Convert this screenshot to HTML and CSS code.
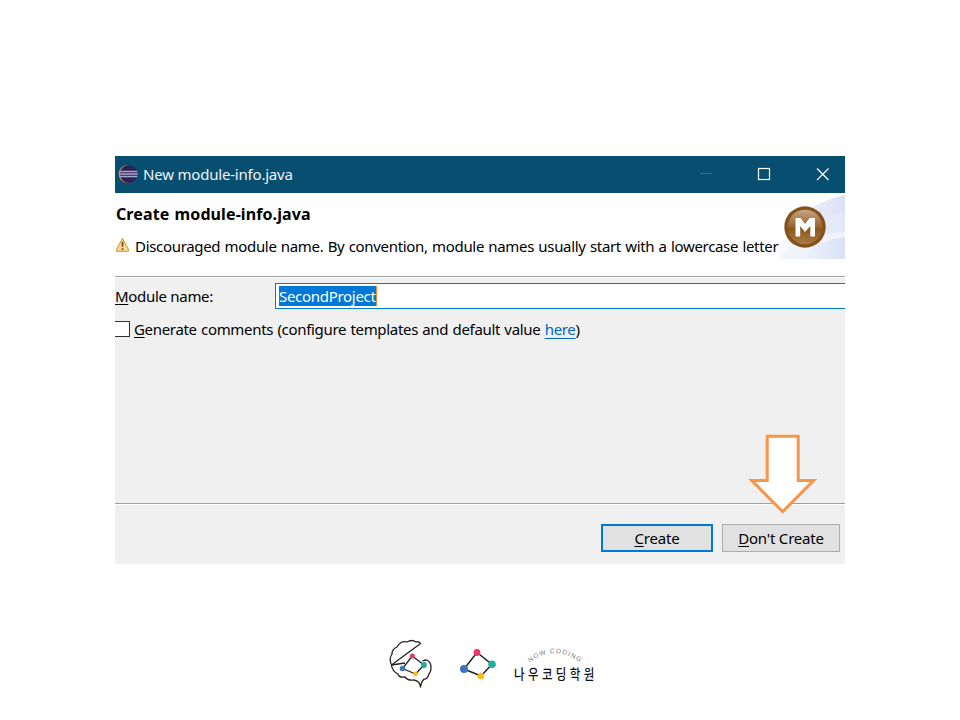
FILE: index.html
```html
<!DOCTYPE html>
<html lang="ko">
<head>
<meta charset="utf-8">
<title>New module-info.java</title>
<link rel="stylesheet" href="styles.css">
</head>
<body>
<main class="slide">
  <section class="dialog">
    <header class="titlebar">
      <svg class="app-icon" width="20" height="20" viewBox="0 0 20 20">
        <circle cx="9.5" cy="10" r="9" fill="#d98a3c"/>
        <circle cx="10.7" cy="10" r="8.9" fill="#2c2255"/>
        <path d="M2 7.5h17.3M1.8 10h17.9M2 12.500h17.3" stroke="#aaa8cc" stroke-width="1.700"/>
      </svg>
      <span class="caption">New module-info.java</span>
      <svg class="controls" width="132" height="14" viewBox="0 0 132 14">
        <path d="M2 6.5h12" stroke="#39708c"/>
        <rect x="60.500" y="1.500" width="11" height="11" fill="none" stroke="#fff" stroke-width="1.2"/>
        <path d="M119 1.500l11.500 11.500M130.500 1.500l-11.500 11.500" stroke="#fff" stroke-width="1.2"/>
      </svg>
    </header>
    <div class="banner">
      <div class="banner-text">
        <h1 class="heading">Create module-info.java</h1>
        <p class="message">
          <svg class="warning" width="15" height="16" viewBox="0 0 15 16">
            <path d="M7.500 1.500L13.500 12.500Q14 14.300 12.500 14.300H2.500Q1 14.300 1.500 12.500Z" fill="#fbdc92" stroke="#d9a24a" stroke-width="1.200" stroke-linejoin="round"/>
            <path d="M7.500 4.800v5M7.500 11.200v1.700" stroke="#6b4a18" stroke-width="1.700"/>
          </svg>
          <span class="message-label">Discouraged module name. By convention, module names usually start with a lowercase letter</span>
        </p>
      </div>
      <svg class="wizard" width="67" height="66" viewBox="0 0 67 66">
        <defs>
          <linearGradient id="sky" x1="0" y1="0" x2="1" y2="0"><stop offset="0" stop-color="#fafbfe"/><stop offset="1" stop-color="#d9e1f4"/></linearGradient>
          <linearGradient id="coin" x1="0" y1="0" x2="0" y2="1"><stop offset="0" stop-color="#c4a684"/><stop offset=".5" stop-color="#97632a"/><stop offset=".55" stop-color="#8c571d"/><stop offset="1" stop-color="#ab7a45"/></linearGradient>
        </defs>
        <path d="M0 66Q10 14 67 2V66Z" fill="url(#sky)"/>
        <path d="M40 26Q54 20 67 21V39Q53 39 38 49Z" fill="#e3e9f7"/>
        <path d="M3 64Q34 40 67 39V44Q36 48 24 66H0Z" fill="#f0f3fb"/>
        <circle cx="27" cy="34" r="20.700" fill="#84521b"/>
        <circle cx="27" cy="34" r="17.300" fill="url(#coin)"/>
        <path d="M17.500 43.500V25H22.500L27 31L31.800 25H37V43.500H32.300V33L27 39L22.200 33V43.500Z" fill="#fff"/>
      </svg>
    </div>
    <div class="content">
      <div class="name-row">
        <label class="name-label"><u>M</u>odule name:</label>
        <div class="name-field"><span class="selected">SecondProject</span></div>
      </div>
      <div class="check-row">
        <span class="checkbox"></span>
        <span class="check-label"><u>G</u>enerate comments (configure templates and default value <a class="link">here</a>)</span>
      </div>
    </div>
    <footer class="actions">
      <button class="button primary"><span><u>C</u>reate</span></button>
      <button class="button secondary"><span><u>D</u>on't Create</span></button>
    </footer>
    <svg class="arrow" width="70" height="82" viewBox="0 0 70 82">
      <path d="M19.500 3.500H50.500V47.700H66L35 79L4 47.700H19.500Z" transform="translate(-.3 -.3)" fill="#fff" stroke="#f79646" stroke-width="3"/>
    </svg>
  </section>
  <div class="brand">
    <svg width="220" height="60" viewBox="385 635 220 60">
      <g fill="none" stroke="#222" stroke-width="1.300" stroke-linejoin="round">
        <path d="M391.500 665Q388.500 659 392 654Q392 649 397 647Q401 640 407 642Q412 639 416 642Q419 641 420.500 643.500L391.500 665Q392 671 398 674Q399 678 405 677Q408 681 414 680Q420 681 420.500 687Q421 682 424 679Q427 680 429 674Q432 670 430.500 664Q428 658 422.500 661"/>
        <path d="M391.500 665L405 663"/>
        <path d="M412.300 656L424 665L415.500 674L402.500 668.500Z"/>
        <path d="M477 652.500L492 664.300L481 676L464 669Z" stroke-width="1.500"/>
      </g>
      <circle cx="412.300" cy="656" r="2.600" fill="#e63965"/><circle cx="424" cy="665" r="2.900" fill="#22ad9c"/><circle cx="415.500" cy="674" r="2.300" fill="#fdb913"/><circle cx="402.500" cy="668.500" r="2.800" fill="#3d74bd"/>
      <circle cx="477" cy="652.500" r="3.400" fill="#e63965"/><circle cx="492" cy="664.300" r="3.800" fill="#22ad9c"/><circle cx="481" cy="676" r="3.200" fill="#fdb913"/><circle cx="464" cy="669" r="4" fill="#3d74bd"/>
      <path id="arc" d="M530 662.500Q554 643.500 580 662.500" fill="none"/>
      <text class="brand-en"><textPath href="#arc" textLength="54">NOW CODING</textPath></text>
      <text class="brand-ko" transform="translate(514 678.500) scale(.82 1)" textLength="98">나우코딩학원</text>
    </svg>
  </div>
</main>
</body>
</html>
```

FILE: styles.css
```css
* { box-sizing: border-box; }
body { margin: 0; background: #fff; }
.slide {
  width: 960px;
  height: 720px;
  padding-top: 156px;
  overflow: hidden;
  color: #000;
  font: 15px/20px "Noto Sans", "Noto Sans CJK KR", sans-serif;
}
.dialog {
  position: relative;
  display: flex;
  flex-direction: column;
  width: 730px;
  height: 408px;
  margin: 0 auto;
  background: #f0f0f0;
  white-space: nowrap;
}
svg { display: block; flex: none; }
u { text-decoration-thickness: 1px; text-underline-offset: 2px; }
.titlebar {
  display: flex;
  align-items: center;
  height: 37px;
  padding: 0 15px 2px 3px;
  background: #084e70;
  color: #eef4f7;
}
.caption { margin-left: 5px; letter-spacing: -.2px; }
.controls { margin-left: auto; }
.banner {
  display: flex;
  justify-content: space-between;
  height: 84px;
  background: #fff;
  border-bottom: 1px solid #a0a0a0;
}
.banner-text { width: 663px; padding: 11px 0 0 1px; }
.heading { margin: 0; font-size: 16px; line-height: 20px; font-weight: 700; letter-spacing: .1px; word-spacing: 1px; }
.message { display: flex; align-items: center; gap: 5px; margin: 12px 0 0 -1px; }
.warning { margin-bottom: 3px; }
.message-label { letter-spacing: -.32px; word-spacing: .7px; }
.content {
  height: 227px;
  padding-top: 5px;
  border-top: 1px solid #fff;
  border-bottom: 1px solid #a0a0a0;
}
.name-row { display: flex; align-items: center; height: 26px; }
.name-label { width: 160px; letter-spacing: -.3px; }
.name-field {
  display: flex;
  align-items: center;
  flex: 1;
  height: 26px;
  padding-left: 3px;
  background: #fff;
  border: 1px solid #0078d7;
  border-right: 0;
}
.selected { background: #0078d7; color: #fff; border-right: 1px solid #ff8728; letter-spacing: -.3px; }
.check-row { display: flex; align-items: center; gap: 4px; margin-top: 10px; }
.checkbox { width: 15px; height: 16px; background: #fff; border: 1px solid #333; border-left: 0; }
.check-label { letter-spacing: -.32px; word-spacing: .7px; }
.link { color: #0066cc; text-decoration: underline; text-decoration-thickness: 1px; text-underline-offset: 3px; }
.actions {
  display: flex;
  justify-content: flex-end;
  gap: 9px;
  flex: 1;
  padding: 19px 5px 0 0;
  border-top: 1px solid #fff;
}
.button {
  height: 28px;
  padding: 0;
  background: #e1e1e1;
  border: 1px solid #adadad;
  border-radius: 0;
  color: #000;
  font: inherit;
  letter-spacing: -.2px;
}
.primary { width: 112px; border: 2px solid #0078d7; }
.secondary { width: 118px; }
.arrow { position: absolute; left: 633px; top: 277px; }
.brand { margin: 71px 0 0 385px; }
.brand-en { font: 6.5px "Liberation Sans", sans-serif; fill: #777; }
.brand-ko { font: 500 14px "Noto Sans CJK KR", sans-serif; fill: #111; }
```
